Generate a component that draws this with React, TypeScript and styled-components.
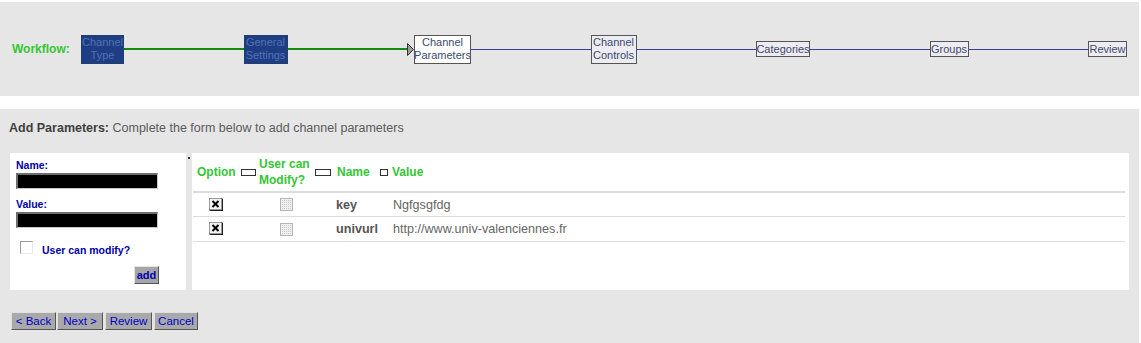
import React from "react";
import styled, { createGlobalStyle } from "styled-components";

const Global = createGlobalStyle`
  html, body { margin: 0; padding: 0; background: #ffffff; }
  body { font-family: "Liberation Sans", Arial, sans-serif; }
  * { box-sizing: border-box; }
`;

const Page = styled.div`
  width: 1141px;
  height: 343px;
  overflow: hidden;
  padding-top: 2px;
`;

const WorkflowBand = styled.div`
  width: 1139px;
  height: 94px;
  background: #e6e6e6;
  display: flex;
  align-items: center;
  padding: 0 12px 0 12px;
`;

const WorkflowLabel = styled.span`
  color: #33c633;
  font-weight: bold;
  font-size: 12px;
  width: 69px;
  flex: none;
`;

const Track = styled.div`
  flex: 1;
  display: flex;
  align-items: center;
`;

const Node = styled.div<{ $kind: "done" | "current" | "todo"; $w: number; $tall?: boolean }>`
  flex: none;
  width: ${(p) => p.$w}px;
  height: ${(p) => (p.$tall ? 29 : 16)}px;
  display: flex;
  align-items: center;
  justify-content: center;
  text-align: center;
  font-size: 11px;
  line-height: 13px;
  border: 1px solid ${(p) => (p.$kind === "done" ? "#20406a" : "#555")};
  background: ${(p) =>
    p.$kind === "done" ? "#1e3d85" : p.$kind === "current" ? "#ffffff" : "#ececf2"};
  color: ${(p) => (p.$kind === "done" ? "#5272b4" : "#3d4b6b")};
`;

const Connector = styled.div<{ $done?: boolean }>`
  flex: 1;
  height: ${(p) => (p.$done ? 2 : 1)}px;
  background: ${(p) => (p.$done ? "#148a14" : "#3c3ca4")};
`;

const Arrow = styled.svg`
  flex: none;
  display: block;
`;

const Gap = styled.div`
  height: 13px;
`;

const Main = styled.div`
  width: 1139px;
  height: 240px;
  background: #e6e6e6;
  padding: 12px 10px 0 10px;
`;

const Heading = styled.div`
  font-size: 12.5px;
  line-height: 14px;
  color: #5a5a5a;
  margin-left: -1px;
  margin-bottom: 18px;
  b { color: #3f3f3f; }
`;

const Panels = styled.div`
  display: flex;
  gap: 6px;
  height: 137px;
  position: relative;
`;

const Dot = styled.span`
  position: absolute;
  left: 178px;
  top: 4px;
  width: 2px;
  height: 2px;
  background: #333;
`;

const FormPanel = styled.div`
  width: 176px;
  background: #ffffff;
  padding: 6px 6px 0 6px;
  display: flex;
  flex-direction: column;
`;

const FieldLabel = styled.label`
  font-size: 10.5px;
  font-weight: bold;
  color: #0000a8;
  line-height: 12px;
  display: block;
  margin-bottom: 2px;
`;

const BlackInput = styled.div<{ $mb: number }>`
  width: 142px;
  height: 16px;
  flex: none;
  background: #000;
  border-top: 2px solid #6e6e6e;
  border-left: 2px solid #6e6e6e;
  border-right: 1px solid #c8c8c8;
  border-bottom: 1px solid #c8c8c8;
  margin-bottom: ${(p) => p.$mb}px;
`;

const CheckRow = styled.div`
  display: flex;
  align-items: flex-start;
  padding-left: 4px;
  gap: 9px;
  height: 14px;
`;

const PlainBox = styled.span`
  width: 13px;
  height: 13px;
  flex: none;
  border-top: 1px solid #9a9a9a;
  border-left: 1px solid #9a9a9a;
  border-right: 1px solid #e8e8e8;
  border-bottom: 1px solid #e8e8e8;
  background: #fff;
`;

const CheckLabel = styled.span`
  font-size: 10.5px;
  font-weight: bold;
  color: #0000a8;
  line-height: 12px;
  position: relative;
  top: 3px;
`;

const AddButton = styled.button`
  align-self: flex-end;
  margin-top: 11px;
  margin-right: 21px;
  width: 25px;
  height: 18px;
  padding: 0;
  background: #a6a6a6;
  border-top: 1px solid #e4e4e4;
  border-left: 1px solid #e4e4e4;
  border-right: 1px solid #555;
  border-bottom: 1px solid #555;
  color: #0000b0;
  font-family: "Liberation Sans", Arial, sans-serif;
  font-weight: bold;
  font-size: 11px;
`;

const TablePanel = styled.div`
  flex: none;
  width: 937px;
  background: #ffffff;
  padding: 0 4px 0 1px;
`;

const HeaderRow = styled.div`
  display: grid;
  grid-template-columns: 65px 76px 57px 1fr;
  height: 40px;
  align-items: center;
  border-bottom: 2px solid #dcdcdc;
`;

const HeadCell = styled.div<{ $pad: number }>`
  display: flex;
  align-items: center;
  gap: 5px;
  padding-left: ${(p) => p.$pad}px;
  color: #33c633;
  font-weight: bold;
  font-size: 12px;
  line-height: 16px;
`;

const SortBox = styled.span<{ $w: number; $ml?: number }>`
  width: ${(p) => p.$w}px;
  margin-left: ${(p) => p.$ml ?? 0}px;
  height: 7px;
  border: 1px solid #333;
  background: #fff;
  flex: none;
  margin-top: 1px;
`;

const DataRow = styled.div<{ $h: number }>`
  display: grid;
  grid-template-columns: 65px 76px 57px 1fr;
  height: ${(p) => p.$h}px;
  align-items: center;
  border-bottom: 1px solid #dcdcdc;
`;

const Cell = styled.div<{ $pad: number; $bold?: boolean }>`
  padding-left: ${(p) => p.$pad}px;
  font-size: 12.6px;
  color: ${(p) => (p.$bold ? "#555" : "#666")};
  font-weight: ${(p) => (p.$bold ? "bold" : "normal")};
  display: flex;
  align-items: center;
`;

const Buttons = styled.div`
  display: flex;
  gap: 1px;
  margin-top: 22px;
  padding-left: 1px;
`;

const NavButton = styled.button<{ $w: number; $ml?: number }>`
  width: ${(p) => p.$w}px;
  margin-left: ${(p) => p.$ml ?? 0}px;
  height: 18px;
  padding: 0;
  background: #a9a9a9;
  border-top: 1px solid #e0e0e0;
  border-left: 1px solid #e0e0e0;
  border-right: 1px solid #555;
  border-bottom: 1px solid #555;
  color: #0000c8;
  font-family: "Liberation Sans", Arial, sans-serif;
  font-size: 11.5px;
`;

const XBox = () => (
  <svg width="15" height="14" viewBox="0 0 15 14">
    <rect x="1" y="1" width="13" height="12" fill="#000" />
    <rect x="0" y="0" width="13" height="12" fill="#f2f2f2" stroke="#444" strokeWidth="1" />
    <path d="M3.5 3 L9.5 9 M9.5 3 L3.5 9" stroke="#000" strokeWidth="2" />
    <rect x="5.5" y="5" width="2" height="2" fill="#000" />
  </svg>
);

const DisabledBox = () => (
  <svg width="13" height="13" viewBox="0 0 13 13">
    <defs>
      <pattern id="dots" width="2" height="2" patternUnits="userSpaceOnUse">
        <rect width="2" height="2" fill="#f0f0f0" />
        <rect width="1" height="1" fill="#c8c8c8" />
      </pattern>
    </defs>
    <rect x="0.5" y="0.5" width="12" height="12" fill="url(#dots)" stroke="#b4b4b4" />
  </svg>
);

export default function App() {
  return (
    <Page>
      <Global />
      <WorkflowBand>
        <WorkflowLabel>Workflow:</WorkflowLabel>
        <Track>
          <Node $kind="done" $w={43} $tall>Channel<br />Type</Node>
          <Connector $done />
          <Node $kind="done" $w={44} $tall>General<br />Settings</Node>
          <Connector $done />
          <Arrow width="7" height="13" viewBox="0 0 7 13">
            <path d="M0.5 0.5 L6.5 6.5 L0.5 12.5 Z" fill="#9a9a9a" stroke="#333" strokeWidth="1" />
          </Arrow>
          <Node $kind="current" $w={57} $tall>Channel<br />Parameters</Node>
          <Connector />
          <Node $kind="todo" $w={46} $tall>Channel<br />Controls</Node>
          <Connector />
          <Node $kind="todo" $w={54}>Categories</Node>
          <Connector />
          <Node $kind="todo" $w={39}>Groups</Node>
          <Connector />
          <Node $kind="todo" $w={39}>Review</Node>
        </Track>
      </WorkflowBand>
      <Gap />
      <Main>
        <Heading>
          <b>Add Parameters:</b> Complete the form below to add channel parameters
        </Heading>
        <Panels>
          <Dot />
          <FormPanel>
            <FieldLabel>Name:</FieldLabel>
            <BlackInput $mb={9} />
            <FieldLabel>Value:</FieldLabel>
            <BlackInput $mb={13} />
            <CheckRow>
              <PlainBox />
              <CheckLabel>User can modify?</CheckLabel>
            </CheckRow>
            <AddButton>add</AddButton>
          </FormPanel>
          <TablePanel>
            <HeaderRow>
              <HeadCell $pad={4}>Option<SortBox $w={15} /></HeadCell>
              <HeadCell $pad={1}>
                <span>User can<br />Modify?</span>
                <SortBox $w={16} />
              </HeadCell>
              <HeadCell $pad={3}>Name<SortBox $w={8} $ml={5} /></HeadCell>
              <HeadCell $pad={1}>Value</HeadCell>
            </HeaderRow>
            <DataRow $h={24}>
              <Cell $pad={16}><XBox /></Cell>
              <Cell $pad={22}><DisabledBox /></Cell>
              <Cell $pad={2} $bold>key</Cell>
              <Cell $pad={2}>Ngfgsgfdg</Cell>
            </DataRow>
            <DataRow $h={25}>
              <Cell $pad={16}><XBox /></Cell>
              <Cell $pad={22}><DisabledBox /></Cell>
              <Cell $pad={2} $bold>univurl</Cell>
              <Cell $pad={2}>http://www.univ-valenciennes.fr</Cell>
            </DataRow>
          </TablePanel>
        </Panels>
        <Buttons>
          <NavButton $w={45}>&lt; Back</NavButton>
          <NavButton $w={46}>Next &gt;</NavButton>
          <NavButton $w={47} $ml={1}>Review</NavButton>
          <NavButton $w={44} $ml={1}>Cancel</NavButton>
        </Buttons>
      </Main>
    </Page>
  );
}
